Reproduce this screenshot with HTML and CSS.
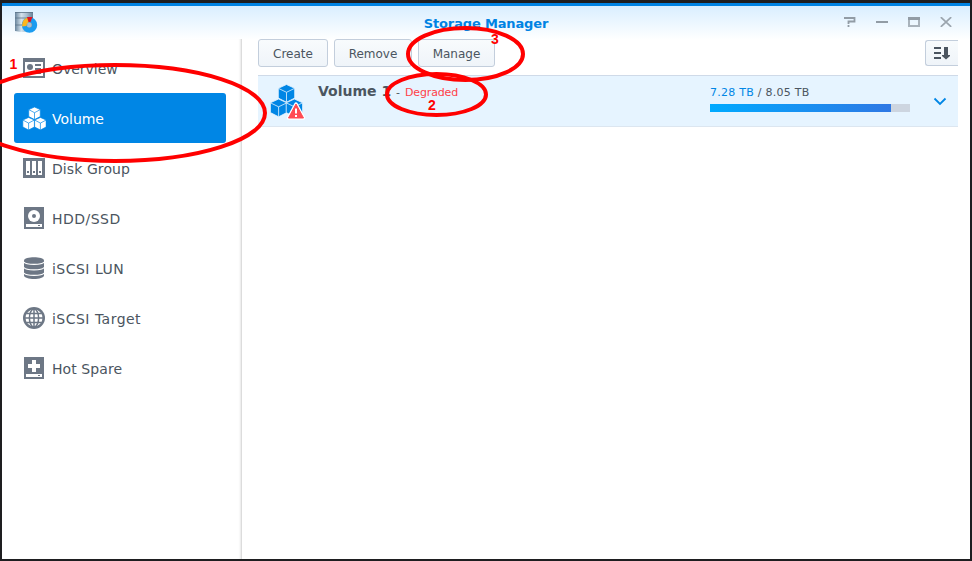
FILE: index.html
```html
<!DOCTYPE html>
<html lang="en">
<head>
<meta charset="utf-8">
<title>Storage Manager</title>
<link rel="stylesheet" href="styles.css">
</head>
<body>
<div class="window">
  <header class="titlebar">
    <svg class="app-icon" width="24" height="24" viewBox="0 0 24 24">
      <defs><linearGradient id="metal"><stop offset="0" stop-color="#68849c"/><stop offset=".35" stop-color="#d4e2ec"/><stop offset=".65" stop-color="#a9bfd0"/><stop offset="1" stop-color="#657f96"/></linearGradient></defs>
      <path d="M1 1h18v19q-9 2-18 0z" fill="url(#metal)"/>
      <path d="M1 1.500h18M1 7h18M1 14h18" stroke="#5c7488" stroke-width=".8" fill="none"/>
      <circle cx="15.500" cy="14" r="5.200" fill="none" stroke="#1b9cf0" stroke-width="5"/>
      <path d="M8 15.500Q8 8 13.500 6.500l1.500 4.500q-2.500 1-2.500 4z" fill="#fcb61e"/>
      <path d="M13 6h5.500l-2 5h-2z" fill="#df1423"/>
      <circle cx="15.500" cy="14" r="2.300" fill="#a9bfd0"/>
    </svg>
    <h1 class="title">Storage Manager</h1>
    <div class="controls">
      <svg width="12" height="10" viewBox="0 0 12 10"><path d="M0 1h10.500v3.500H4.500V7M4.500 8v2" fill="none" stroke="#929ca5" stroke-width="1.800"/></svg>
      <svg width="12" height="10" viewBox="0 0 12 10"><path d="M0 5h12" stroke="#929ca5" stroke-width="2"/></svg>
      <svg width="12" height="10" viewBox="0 0 12 10"><path d="M1 0v10M11 0v10M0 9h12" stroke="#a9b3bc" stroke-width="2"/><path d="M0 1.500h12" stroke="#929ca5" stroke-width="3"/></svg>
      <svg width="12" height="10" viewBox="0 0 12 10"><path d="M.8.200l10.400 9.600M11.200.200L.8 9.800" stroke="#9ba5ae" stroke-width="1.800"/></svg>
    </div>
  </header>
  <div class="body">
    <nav class="sidebar">
      <a class="item">
        <svg width="24" height="24" viewBox="0 0 24 24"><path fill="#6d7785" d="M1 2h22v20H1z"/><path fill="#fff" d="M3 6h18v14H3z"/><path fill="#6d7785" d="M13 8h6v2h-6zM13 12h6v2h-6zM5 16h14v2H5z"/><circle cx="8" cy="11" r="3" fill="#6d7785"/></svg>
        <span class="label">Overview</span></a>
      <a class="item selected">
        <svg width="24" height="24" viewBox="0 0 24 24"><g fill="#fff" stroke="#0086e5" stroke-width=".7" stroke-linejoin="round"><g id="cube"><path d="M12.500 1l5.800 2.600v7l-5.800 3-5.800-3v-7z"/><path d="M6.700 3.600l5.800 3.100 5.800-3.100M12.500 6.700v6.900" fill="none"/></g><use href="#cube" x="-5.900" y="10.400"/><use href="#cube" x="5.900" y="10.400"/></g></svg>
        <span class="label">Volume</span></a>
      <a class="item">
        <svg width="24" height="24" viewBox="0 0 24 24"><path fill="#6d7785" d="M1 2h22v20H1z"/><path fill="#fff" d="M4 5h4v14H4zM10 5h4v14h-4zM16 5h4v14h-4z"/><path fill="#6d7785" d="M5 15h2v2H5zM11 15h2v2h-2zM17 15h2v2h-2z"/></svg>
        <span class="label medium">Disk Group</span></a>
      <a class="item">
        <svg width="24" height="24" viewBox="0 0 24 24"><path fill="#6d7785" d="M2 1h20v22H2z"/><circle cx="12" cy="10" r="6" fill="#fff"/><circle cx="12" cy="10" r="2" fill="#6d7785"/><path fill="#fff" d="M4 18h16v3H4z"/><path fill="#6d7785" d="M16 19h2v1h-2z"/></svg>
        <span class="label wide">HDD/SSD</span></a>
      <a class="item">
        <svg width="24" height="24" viewBox="0 0 24 24"><path fill="#6d7785" d="M2 4.500C2 .200 22 .200 22 4.500v15c0 4.600-20 4.600-20 0z"/><path d="M2 6c2 3.200 18 3.200 20 0M2 11.500c2 3.200 18 3.200 20 0M2 17c2 3.200 18 3.200 20 0" fill="none" stroke="#fff" stroke-width="1.200"/></svg>
        <span class="label wide">iSCSI LUN</span></a>
      <a class="item">
        <svg width="24" height="24" viewBox="0 0 24 24"><circle cx="12" cy="12" r="11" fill="#6d7785"/><circle cx="12" cy="12" r="8.500" fill="#fff"/><path d="M12 2v20M3 12h18M4.500 7.500h15M4.500 16.500h15" stroke="#6d7785" stroke-width="1.500"/><ellipse cx="12" cy="12" rx="4.600" ry="9" fill="none" stroke="#6d7785" stroke-width="1.500"/></svg>
        <span class="label wide">iSCSI Target</span></a>
      <a class="item">
        <svg width="24" height="24" viewBox="0 0 24 24"><path fill="#6d7785" d="M2 1h20v22H2z"/><path fill="#fff" d="M10 4h4v4h4v4h-4v4h-4v-4H6V8h4zM4 18h16v3H4z"/><path fill="#6d7785" d="M16 19h2v1h-2z"/></svg>
        <span class="label medium">Hot Spare</span></a>
    </nav>
    <main class="content">
      <div class="toolbar">
        <button class="btn create">Create</button>
        <button class="btn remove">Remove</button>
        <button class="btn manage">Manage</button>
        <button class="btn sort"><svg width="18" height="14" viewBox="0 0 18 14"><path d="M1 2h7M1 7h7M1 12h7" stroke="#4b5560" stroke-width="2"/><path d="M11 1h4v8h2v1l-4 3.500L9 10V9h2z" fill="#4b5560"/></svg></button>
      </div>
      <section class="volume">
        <svg class="volume-icon" width="36" height="36" viewBox="0 0 36 36">
          <g fill="#0086e5" stroke="#e6f4ff" stroke-width=".8" stroke-linejoin="round"><g id="block"><path d="M16.500.500l8.200 3.800v9.800l-8.200 4.200-8.200-4.200V4.300z"/><path d="M8.300 4.300l8.200 4 8.200-4M16.500 8.300v10" fill="none"/></g><use href="#block" x="-7.900" y="14.500"/><use href="#block" x="7.900" y="14.500"/></g>
          <path d="M26 20l7.500 14h-15z" fill="#ff4b52" stroke="#fff" stroke-width="3.500" stroke-linejoin="round"/><path d="M26 20l7.500 14h-15z" fill="#ff4b52" stroke="#ff4b52" stroke-linejoin="round"/><path d="M26 24.500v5M26 31v2" stroke="#fff" stroke-width="2"/>
        </svg>
        <div class="heading"><span class="name">Volume 1</span><span class="dash">-</span><span class="status">Degraded</span></div>
        <div class="usage">
          <div class="amount"><span class="used">7.28 TB</span> / 8.05 TB</div>
          <div class="track"><div class="fill"></div></div>
        </div>
        <svg class="chevron" width="14" height="9" viewBox="0 0 14 9"><path d="M1.500 1.500L7 7l5.500-5.500" fill="none" stroke="#0086e5" stroke-width="1.800"/></svg>
      </section>
    </main>
  </div>
</div>
<svg class="marks" width="972" height="561" viewBox="0 0 972 561">
  <g fill="none" stroke="#f00" stroke-width="4">
    <ellipse cx="115" cy="113" rx="150" ry="48"/>
    <ellipse cx="436.500" cy="94.500" rx="49.500" ry="20.500"/>
    <ellipse cx="465.500" cy="54" rx="57.500" ry="26"/>
  </g>
  <g class="mark-text"><text x="9.500" y="69">1</text><text x="428" y="110">2</text><text x="491" y="44">3</text></g>
</svg>
</body>
</html>
```
FILE: styles.css
```css
* { box-sizing: border-box; }
body {
  margin: 0;
  width: 972px;
  height: 561px;
  padding: 3px 2px 2px;
  overflow: hidden;
  background: #1e1e20;
  font-family: Verdana, "DejaVu Sans", sans-serif;
  color: #4b5560;
}
svg { display: block; flex: none; }
.window {
  height: 556px;
  display: flex;
  flex-direction: column;
  border-top: 3px solid #0083e3;
  background: linear-gradient(#d9eeff, #fff 34px);
}
.titlebar {
  height: 33px;
  flex: none;
  display: grid;
  grid-template-columns: 120px 1fr 120px;
  align-items: start;
}
.app-icon { margin: 5px 0 0 12px; }
.title {
  margin: 10px 0 0;
  font-size: 13px;
  line-height: 16px;
  text-align: center;
  color: #0083e3;
  letter-spacing: -0.15px;
}
.controls {
  display: flex;
  justify-content: flex-end;
  gap: 20px;
  padding: 11px 18px 0 0;
}
.body { flex: 1; display: flex; }
.sidebar {
  width: 240px;
  padding: 4px 15px 0 12px;
  border-right: 1px solid #dcdcdc;
  box-shadow: inset -2px 0 2px -1px #e8e8e8;
}
.item {
  display: flex;
  align-items: center;
  height: 50px;
  padding-left: 8px;
  gap: 6px;
  border-radius: 3px;
  font-size: 14px;
}
.label { padding-top: 2px; letter-spacing: -0.02px; }
.medium { letter-spacing: 0.08px; }
.wide { letter-spacing: 0.48px; }
.selected { background: #0086e5; color: #fff; }
.content { flex: 1; padding: 0 12px 0 16px; }
.toolbar { display: flex; gap: 6px; height: 36px; }
.btn {
  height: 28px;
  padding: 1px 0 0;
  border: 1px solid #c3cedc;
  border-radius: 3px;
  background: linear-gradient(#f8fbfd, #eff4f9);
  font: 12px/24px Verdana, "DejaVu Sans", sans-serif;
  color: #4b5560;
}
.create { width: 70px; }
.remove { width: 78px; }
.manage { width: 77px; }
.sort {
  width: 33px;
  height: 26px;
  margin: 1px 0 0 auto;
  padding: 0 0 0 7px;
  border-right: 0;
  border-radius: 3px 0 0 3px;
}
.volume {
  display: flex;
  align-items: flex-start;
  height: 52px;
  border-top: 1px solid #cfdae8;
  border-bottom: 1px solid #dce6f0;
  background: #e6f4ff;
}
.volume-icon { margin: 8px 0 0 12px; }
.heading {
  display: flex;
  align-items: baseline;
  margin: 6px 0 0 12px;
  width: 392px;
  line-height: 18px;
  font-size: 11px;
  white-space: nowrap;
}
.name { font-size: 14px; font-weight: bold; width: 78px; }
.dash { width: 9px; }
.status { color: #ff4048; letter-spacing: -0.15px; }
.usage { width: 200px; padding-top: 10px; }
.amount { font-size: 11px; line-height: 14px; letter-spacing: 0.26px; }
.used { color: #0086e5; }
.track { height: 8px; margin-top: 4px; background: #cdd5e0; }
.fill { width: 181px; height: 8px; background: linear-gradient(90deg, #00aaff, #2f78e4); }
.chevron { margin: 21px 0 0 23px; }
.marks { position: absolute; left: 0; top: 0; pointer-events: none; }
.mark-text { font: bold 14px "Liberation Sans", Arial, sans-serif; fill: #f00; }
```
